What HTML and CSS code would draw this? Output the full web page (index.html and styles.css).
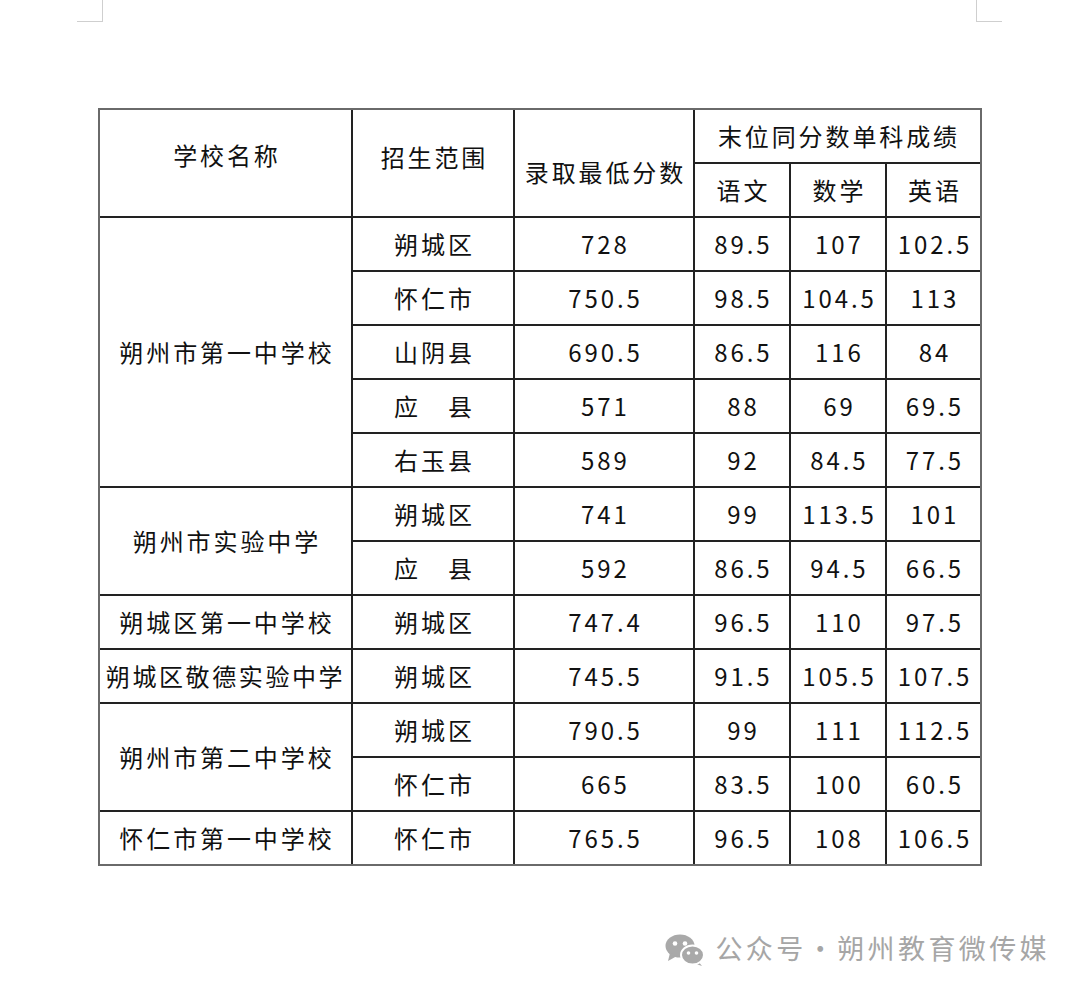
FILE: index.html
```html
<!DOCTYPE html>
<html lang="zh">
<head>
<meta charset="utf-8">
<link rel="stylesheet" href="styles.css">
</head>
<body>
<div class="page">
  <div class="marks">
    <div class="mark mark-left"></div>
    <div class="mark mark-right"></div>
  </div>
  <div class="table-wrap">
    <table class="scores">
      <colgroup>
        <col class="c1"><col class="c2"><col class="c3"><col class="c4"><col class="c5"><col class="c6">
      </colgroup>
      <tr>
        <td rowspan="2" class="h-school">学校名称</td>
        <td rowspan="2" class="h-range">招生范围</td>
        <td rowspan="2" class="h-min">录取最低分数</td>
        <td colspan="3" class="h-tie">末位同分数单科成绩</td>
      </tr>
      <tr>
        <td class="h-sub">语文</td><td class="h-sub">数学</td><td class="h-sub">英语</td>
      </tr>
      <tr><td rowspan="5">朔州市第一中学校</td><td>朔城区</td><td>728</td><td>89.5</td><td>107</td><td>102.5</td></tr>
      <tr><td>怀仁市</td><td>750.5</td><td>98.5</td><td>104.5</td><td>113</td></tr>
      <tr><td>山阴县</td><td>690.5</td><td>86.5</td><td>116</td><td>84</td></tr>
      <tr><td>应　县</td><td>571</td><td>88</td><td>69</td><td>69.5</td></tr>
      <tr><td>右玉县</td><td>589</td><td>92</td><td>84.5</td><td>77.5</td></tr>
      <tr><td rowspan="2">朔州市实验中学</td><td>朔城区</td><td>741</td><td>99</td><td>113.5</td><td>101</td></tr>
      <tr><td>应　县</td><td>592</td><td>86.5</td><td>94.5</td><td>66.5</td></tr>
      <tr><td>朔城区第一中学校</td><td>朔城区</td><td>747.4</td><td>96.5</td><td>110</td><td>97.5</td></tr>
      <tr><td class="tight">朔城区敬德实验中学</td><td>朔城区</td><td>745.5</td><td>91.5</td><td>105.5</td><td>107.5</td></tr>
      <tr><td rowspan="2">朔州市第二中学校</td><td>朔城区</td><td>790.5</td><td>99</td><td>111</td><td>112.5</td></tr>
      <tr><td>怀仁市</td><td>665</td><td>83.5</td><td>100</td><td>60.5</td></tr>
      <tr><td>怀仁市第一中学校</td><td>怀仁市</td><td>765.5</td><td>96.5</td><td>108</td><td>106.5</td></tr>
    </table>
  </div>
  <div class="watermark">
    <svg class="wx-icon" viewBox="0 0 40 32" width="40" height="32" aria-hidden="true">
      <ellipse cx="15" cy="12" rx="14.5" ry="11.5" fill="#a9a9a9"/>
      <polygon points="5,19 3,27 12,22" fill="#a9a9a9"/>
      <circle cx="10" cy="9.5" r="2.3" fill="#fff"/>
      <circle cx="20" cy="9.5" r="2.3" fill="#fff"/>
      <polygon points="33,27 37,32 28,29" fill="#a9a9a9"/>
      <ellipse cx="27.5" cy="21" rx="11.5" ry="9.5" fill="#a9a9a9" stroke="#fff" stroke-width="2"/>
      <circle cx="23.5" cy="19" r="1.8" fill="#fff"/>
      <circle cx="31.5" cy="19" r="1.8" fill="#fff"/>
    </svg>
    <span class="wx-text">公众号</span><span class="wx-dot">·</span><span class="wx-text">朔州教育微传媒</span>
  </div>
</div>
</body>
</html>
```

FILE: styles.css
```css
html, body {
  margin: 0;
  padding: 0;
  background: #ffffff;
}

.page {
  width: 1080px;
  height: 996px;
  font-family: "Noto Sans CJK SC", "Noto Sans", sans-serif;
  color: #151515;
}

.marks {
  display: flex;
  justify-content: space-between;
  padding: 0 78px 0 77px;
  height: 22px;
}

.mark {
  width: 25px;
  height: 21px;
  border-bottom: 1.5px solid #cfcfcf;
}

.mark-left {
  border-right: 1.5px solid #cfcfcf;
}

.mark-right {
  border-left: 1.5px solid #cfcfcf;
}

.table-wrap {
  margin: 86px 0 0 98px;
  width: 880px;
  border: 2px solid #6a6a6a;
}

.scores {
  border-collapse: collapse;
  border-style: hidden;
  table-layout: fixed;
  width: 880px;
}

.c1 { width: 252px; }
.c2 { width: 162px; }
.c3 { width: 180px; }
.c4 { width: 96px; }
.c5 { width: 96px; }
.c6 { width: 94px; }

.scores td {
  border: 2px solid #222222;
  height: 52px;
  padding: 0;
  text-align: center;
  vertical-align: middle;
  font-size: 24px;
  line-height: 28px;
  letter-spacing: 2.9px;
  text-indent: 2.9px;
  white-space: nowrap;
  color: #111111;
}

.scores td.tight {
  letter-spacing: 2.6px;
  text-indent: 0;
}

.scores td.h-school {
  padding-bottom: 16px;
}

.scores td.h-range {
  padding-bottom: 12px;
}

.scores td.h-min {
  padding-top: 18px;
}

.watermark {
  display: flex;
  align-items: center;
  justify-content: flex-end;
  margin-top: 64px;
  padding-right: 30px;
  height: 36px;
}

.wx-icon {
  display: block;
  margin-right: 10px;
  margin-top: 3px;
}

.wx-text {
  font-size: 27px;
  line-height: 36px;
  letter-spacing: 3.4px;
  color: #a6a6a6;
}

.wx-dot {
  font-size: 27px;
  line-height: 36px;
  color: #a6a6a6;
  width: 34px;
  margin-left: -3.4px;
  text-align: center;
}
```
